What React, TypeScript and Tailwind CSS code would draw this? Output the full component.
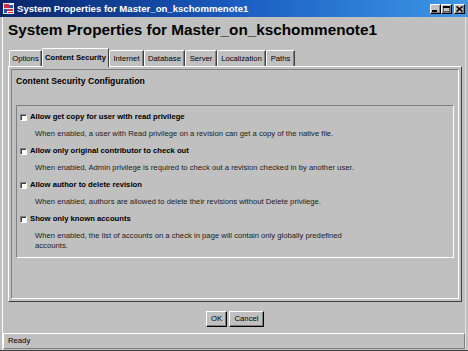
const tabs = [
  { name: "Options", w: "w-[33px]" },
  { name: "Content Security", w: "w-[67px]", active: true },
  { name: "Internet", w: "w-[35px]" },
  { name: "Database", w: "w-[41px]" },
  { name: "Server", w: "w-[32px]" },
  { name: "Localization", w: "w-[49px]" },
  { name: "Paths", w: "w-[29px]" },
];

const options = [
  {
    label: "Allow get copy for user with read privilege",
    desc: ["When enabled, a user with Read privilege on a revision can get a copy of the native file."],
  },
  {
    label: "Allow only original contributor to check out",
    desc: ["When enabled, Admin privilege is required to check out a revision checked in by another user."],
  },
  {
    label: "Allow author to delete revision",
    desc: ["When enabled, authors are allowed to delete their revisions without Delete privilege."],
  },
  {
    label: "Show only known accounts",
    desc: [
      "When enabled, the list of accounts on a check in page will contain only globally predefined",
      "accounts.",
    ],
  },
];

function TitleIcon() {
  return (
    <svg width="11" height="11" viewBox="0 0 11 11">
      <rect x="0" y="0" width="11" height="11" fill="#e8e8f0" />
      <rect x="1" y="1" width="5" height="4" fill="#d03040" />
      <rect x="6" y="2" width="4" height="3" fill="#3050b0" />
      <rect x="1" y="6" width="3" height="4" fill="#3050b0" />
      <rect x="4" y="6" width="6" height="2" fill="#d03040" />
      <rect x="5" y="9" width="5" height="1" fill="#d03040" />
    </svg>
  );
}

function WinButton({ kind }: { kind: "min" | "max" | "close" }) {
  return (
    <div className="flex h-[10px] w-[11px] items-center justify-center border border-t-white border-l-white border-r-black border-b-black bg-[#c0c0c0] shadow-[inset_-1px_-1px_0_#808080]">
      <svg width="7" height="6" viewBox="0 0 7 6">
        {kind === "min" && <rect x="0" y="4" width="5" height="2" fill="#000" />}
        {kind === "max" && (
          <>
            <rect x="0" y="0" width="7" height="6" fill="none" stroke="#000" strokeWidth="1" />
            <rect x="0" y="0" width="7" height="2" fill="#000" />
          </>
        )}
        {kind === "close" && <path d="M0.5 0.5 L6.5 5.5 M6.5 0.5 L0.5 5.5" stroke="#000" strokeWidth="1.6" />}
      </svg>
    </div>
  );
}

function Checkbox() {
  return (
    <div className="h-[7px] w-[7px] shrink-0 border border-t-[#808080] border-l-[#808080] border-r-white border-b-white bg-white shadow-[inset_1px_1px_0_#404040]" />
  );
}

export default function App() {
  return (
    <div className="flex h-[351px] w-[468px] flex-col overflow-hidden bg-[#c0c0c0] font-['Liberation_Sans',Arial,sans-serif] text-black">
      {/* title bar */}
      <div className="flex h-[17px] shrink-0 items-center bg-gradient-to-r from-[#0a246a] via-[#1a5cc0] to-[#3f98e6] pl-[3px] pr-[3px]">
        <TitleIcon />
        <span className="ml-[3px] text-[9.6px] font-bold leading-none text-white">
          System Properties for Master_on_kschommenote1
        </span>
        <div className="ml-auto flex items-center">
          <WinButton kind="min" />
          <WinButton kind="max" />
          <div className="w-[2px]" />
          <WinButton kind="close" />
        </div>
      </div>

      <div className="flex flex-1 flex-col border-l border-l-white ml-[2px] mr-[2px] border-r border-r-[#e0e0e0]">
        <h1 className="mt-[4px] pl-[5px] text-[15.3px] font-bold leading-[18px]">
          System Properties for Master_on_kschommenote1
        </h1>

        {/* tabs */}
        <div className="mt-[9px] flex h-[18px] items-end pl-[6px]">
          {tabs.map((t) =>
            t.active ? (
              <div
                key={t.name}
                className={`${t.w} relative z-10 -mb-px flex h-[19px] items-center justify-center rounded-tl-[2px] border-t border-l border-r border-t-white border-l-white border-r-[#404040] bg-[#c0c0c0] text-[7.6px] font-bold leading-none`}
              >
                {t.name}
              </div>
            ) : (
              <div
                key={t.name}
                className={`${t.w} flex h-[16px] items-center justify-center rounded-tl-[2px] border-t border-l border-r border-t-white border-l-white border-r-[#404040] text-[7.7px] leading-none shadow-[inset_-1px_0_0_#808080]`}
              >
                {t.name}
              </div>
            )
          )}
        </div>

        {/* panel */}
        <div className="ml-[5px] mr-[3px] h-[236px] border border-t-white border-l-white border-r-[#404040] border-b-[#404040] p-[2px]">
          <div className="flex h-full flex-col border border-t-[#808080] border-l-[#808080] border-r-white border-b-white px-[4px]">
            <div className="mt-[5px] text-[8.7px] font-bold leading-[12px]">Content Security Configuration</div>
            <div className="mt-[18px] flex flex-col gap-[7px] border border-t-[#808080] border-l-[#808080] border-r-white border-b-white pt-[6px] pb-[6px] pl-[3px] text-[7.7px] leading-[10px]">
              {options.map((o) => (
                <div key={o.label} className="flex flex-col gap-[7px]">
                  <div className="flex items-center gap-[3px]">
                    <Checkbox />
                    <span className="font-bold">{o.label}</span>
                  </div>
                  <div className="pl-[15px] text-[#202020]">
                    {o.desc.map((d) => (
                      <div key={d}>{d}</div>
                    ))}
                  </div>
                </div>
              ))}
            </div>
          </div>
        </div>

        {/* buttons */}
        <div className="mt-[9px] flex justify-center gap-[2px] pl-[2px]">
          <button className="h-[16px] w-[21px] border border-t-white border-l-white border-r-black border-b-black text-[7.7px] leading-none shadow-[inset_-1px_-1px_0_#808080]">
            OK
          </button>
          <button className="h-[16px] w-[35px] border border-t-white border-l-white border-r-black border-b-black text-[7.7px] leading-none shadow-[inset_-1px_-1px_0_#808080]">
            Cancel
          </button>
        </div>

        {/* status bar */}
        <div className="mt-auto mb-[1px] flex h-[16px] items-center border border-t-white border-l-white border-r-[#808080] border-b-[#808080] pl-[4px] text-[7.7px] leading-none">
          Ready
        </div>
      </div>
      <div className="h-px bg-[#404040]" />
    </div>
  );
}
